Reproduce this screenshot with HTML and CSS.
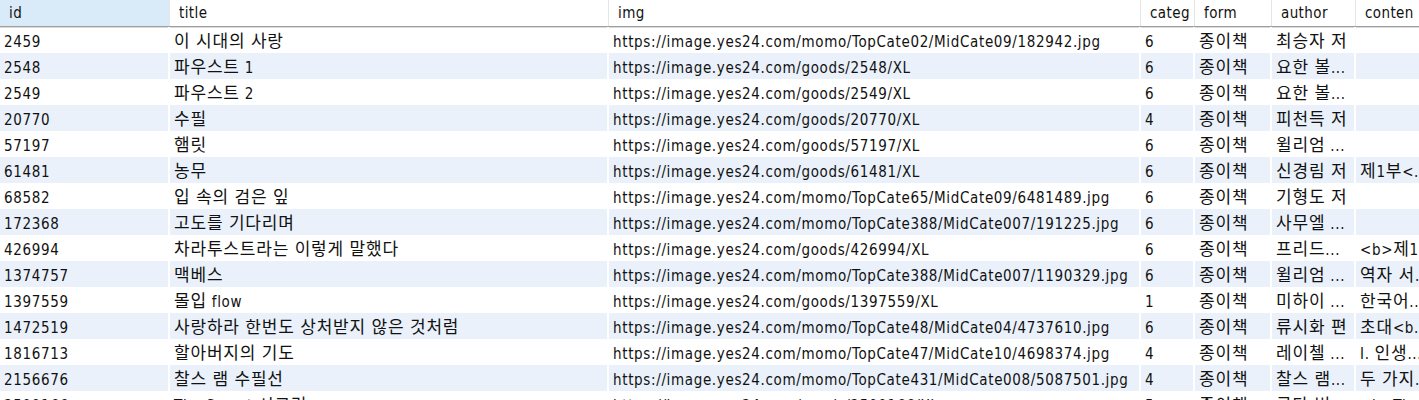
FILE: index.html
```html
<!DOCTYPE html>
<html lang="ko">
<head>
<meta charset="utf-8">
<title>books</title>
<link rel="stylesheet" href="styles.css">
</head>
<body>
<div class="grid">
  <div class="row head">
    <div class="cell c-id sorted">id</div>
    <div class="cell c-title">title</div>
    <div class="cell c-img">img</div>
    <div class="cell c-cat">categ</div>
    <div class="cell c-form">form</div>
    <div class="cell c-author">author</div>
    <div class="cell c-content">conten</div>
  </div>
  <div class="row">
    <div class="cell c-id">2459</div><div class="cell c-title"><span class="ko">이 시대의 사랑</span></div><div class="cell c-img">https://image.yes24.com/momo/TopCate02/MidCate09/182942.jpg</div><div class="cell c-cat">6</div><div class="cell c-form"><span class="ko">종이책</span></div><div class="cell c-author"><span class="ko">최승자 저</span></div><div class="cell c-content"></div>
  </div>
  <div class="row alt">
    <div class="cell c-id">2548</div><div class="cell c-title"><span class="ko">파우스트</span> 1</div><div class="cell c-img">https://image.yes24.com/goods/2548/XL</div><div class="cell c-cat">6</div><div class="cell c-form"><span class="ko">종이책</span></div><div class="cell c-author"><span class="ko">요한 볼</span>...</div><div class="cell c-content"></div>
  </div>
  <div class="row">
    <div class="cell c-id">2549</div><div class="cell c-title"><span class="ko">파우스트</span> 2</div><div class="cell c-img">https://image.yes24.com/goods/2549/XL</div><div class="cell c-cat">6</div><div class="cell c-form"><span class="ko">종이책</span></div><div class="cell c-author"><span class="ko">요한 볼</span>...</div><div class="cell c-content"></div>
  </div>
  <div class="row alt">
    <div class="cell c-id">20770</div><div class="cell c-title"><span class="ko">수필</span></div><div class="cell c-img">https://image.yes24.com/goods/20770/XL</div><div class="cell c-cat">4</div><div class="cell c-form"><span class="ko">종이책</span></div><div class="cell c-author"><span class="ko">피천득 저</span></div><div class="cell c-content"></div>
  </div>
  <div class="row">
    <div class="cell c-id">57197</div><div class="cell c-title"><span class="ko">햄릿</span></div><div class="cell c-img">https://image.yes24.com/goods/57197/XL</div><div class="cell c-cat">6</div><div class="cell c-form"><span class="ko">종이책</span></div><div class="cell c-author"><span class="ko">윌리엄</span> ...</div><div class="cell c-content"></div>
  </div>
  <div class="row alt">
    <div class="cell c-id">61481</div><div class="cell c-title"><span class="ko">농무</span></div><div class="cell c-img">https://image.yes24.com/goods/61481/XL</div><div class="cell c-cat">6</div><div class="cell c-form"><span class="ko">종이책</span></div><div class="cell c-author"><span class="ko">신경림 저</span></div><div class="cell c-content"><span class="ko">제</span>1<span class="ko">부</span>&lt;...</div>
  </div>
  <div class="row">
    <div class="cell c-id">68582</div><div class="cell c-title"><span class="ko">입 속의 검은 잎</span></div><div class="cell c-img">https://image.yes24.com/momo/TopCate65/MidCate09/6481489.jpg</div><div class="cell c-cat">6</div><div class="cell c-form"><span class="ko">종이책</span></div><div class="cell c-author"><span class="ko">기형도 저</span></div><div class="cell c-content"></div>
  </div>
  <div class="row alt">
    <div class="cell c-id">172368</div><div class="cell c-title"><span class="ko">고도를 기다리며</span></div><div class="cell c-img">https://image.yes24.com/momo/TopCate388/MidCate007/191225.jpg</div><div class="cell c-cat">6</div><div class="cell c-form"><span class="ko">종이책</span></div><div class="cell c-author"><span class="ko">사무엘</span> ...</div><div class="cell c-content"></div>
  </div>
  <div class="row">
    <div class="cell c-id">426994</div><div class="cell c-title"><span class="ko">차라투스트라는 이렇게 말했다</span></div><div class="cell c-img">https://image.yes24.com/goods/426994/XL</div><div class="cell c-cat">6</div><div class="cell c-form"><span class="ko">종이책</span></div><div class="cell c-author"><span class="ko">프리드</span>...</div><div class="cell c-content">&lt;b&gt;<span class="ko">제</span>1...</div>
  </div>
  <div class="row alt">
    <div class="cell c-id">1374757</div><div class="cell c-title"><span class="ko">맥베스</span></div><div class="cell c-img">https://image.yes24.com/momo/TopCate388/MidCate007/1190329.jpg</div><div class="cell c-cat">6</div><div class="cell c-form"><span class="ko">종이책</span></div><div class="cell c-author"><span class="ko">윌리엄</span> ...</div><div class="cell c-content"><span class="ko">역자 서</span>...</div>
  </div>
  <div class="row">
    <div class="cell c-id">1397559</div><div class="cell c-title"><span class="ko">몰입</span> flow</div><div class="cell c-img">https://image.yes24.com/goods/1397559/XL</div><div class="cell c-cat">1</div><div class="cell c-form"><span class="ko">종이책</span></div><div class="cell c-author"><span class="ko">미하이</span> ...</div><div class="cell c-content"><span class="ko">한국어</span>...</div>
  </div>
  <div class="row alt">
    <div class="cell c-id">1472519</div><div class="cell c-title"><span class="ko">사랑하라 한번도 상처받지 않은 것처럼</span></div><div class="cell c-img">https://image.yes24.com/momo/TopCate48/MidCate04/4737610.jpg</div><div class="cell c-cat">6</div><div class="cell c-form"><span class="ko">종이책</span></div><div class="cell c-author"><span class="ko">류시화 편</span></div><div class="cell c-content"><span class="ko">초대</span>&lt;b...</div>
  </div>
  <div class="row">
    <div class="cell c-id">1816713</div><div class="cell c-title"><span class="ko">할아버지의 기도</span></div><div class="cell c-img">https://image.yes24.com/momo/TopCate47/MidCate10/4698374.jpg</div><div class="cell c-cat">4</div><div class="cell c-form"><span class="ko">종이책</span></div><div class="cell c-author"><span class="ko">레이첼</span> ...</div><div class="cell c-content">I. <span class="ko">인생</span>...</div>
  </div>
  <div class="row alt">
    <div class="cell c-id">2156676</div><div class="cell c-title"><span class="ko">찰스 램 수필선</span></div><div class="cell c-img">https://image.yes24.com/momo/TopCate431/MidCate008/5087501.jpg</div><div class="cell c-cat">4</div><div class="cell c-form"><span class="ko">종이책</span></div><div class="cell c-author"><span class="ko">찰스 램</span>...</div><div class="cell c-content"><span class="ko">두 가지</span>...</div>
  </div>
  <div class="row">
    <div class="cell c-id">2599166</div><div class="cell c-title">The Secret <span class="ko">시크릿</span></div><div class="cell c-img">https://image.yes24.com/goods/2599166/XL</div><div class="cell c-cat">5</div><div class="cell c-form"><span class="ko">종이책</span></div><div class="cell c-author"><span class="ko">론다 번</span>...</div><div class="cell c-content">&lt;b&gt;Th...</div>
  </div>
</div>
</body>
</html>
```
FILE: styles.css
```css
html, body {
  margin: 0;
  padding: 0;
  background: #fff;
  overflow: hidden;
}
body {
  width: 1419px;
  height: 400px;
  font-family: "DejaVu Sans Condensed", "Noto Sans CJK KR", sans-serif;
  font-size: 15px;
  letter-spacing: 0.65px;
  color: #111;
}
.ko {
  font-family: "Noto Sans CJK KR", sans-serif;
  font-size: 17px;
  line-height: 21px;
  letter-spacing: 0.8px;
}
.grid {
  display: flex;
  flex-direction: column;
  width: 1500px;
}
.row {
  display: flex;
  height: 26px;
  align-items: stretch;
}
.head {
  height: 26px;
  border-bottom: 1px solid #a0a0a0;
  box-shadow: 0 1px 0 #dadada;
  letter-spacing: 0.4px;
}
.cell {
  flex: none;
  box-sizing: border-box;
  white-space: nowrap;
  overflow: hidden;
  line-height: 26px;
  padding-top: 2px;
  padding-left: 4px;
  border-right: 2px solid #fff;
}
.head .cell {
  padding-top: 0;
  padding-left: 9px;
  border-right: 1px solid #e5e5e5;
}
.head .cell.sorted {
  background: #d9eaf9;
}
.alt .cell {
  background: #eaf1fb;
}
.row .c-id { width: 170px; }
.row .c-title { width: 439px; }
.row .c-img { width: 532px; }
.row .c-cat { width: 54px; }
.row .c-form { width: 77px; }
.row .c-author { width: 84px; }
.row .c-content { width: 90px; }
```
